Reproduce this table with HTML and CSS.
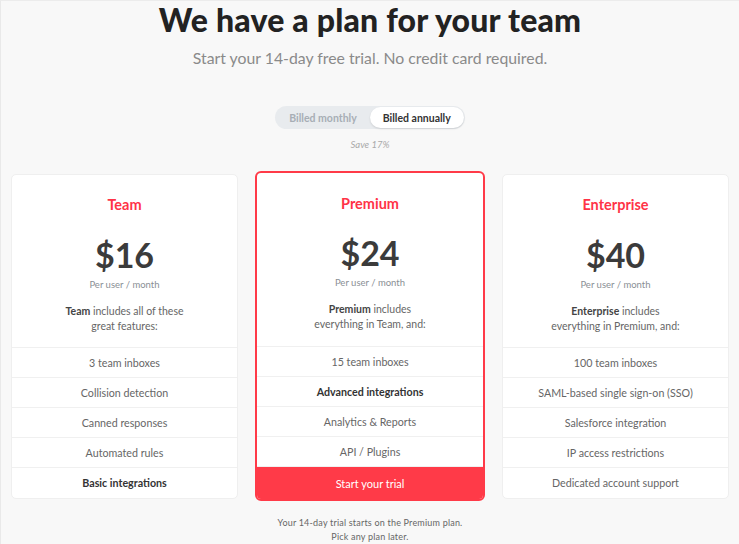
FILE: index.html
```html
<!DOCTYPE html>
<html>
<head>
<meta charset="utf-8">
<link rel="stylesheet" href="styles.css">
</head>
<body>
<div class="page">
  <h1 class="title">We have a plan for your team</h1>
  <p class="subtitle">Start your 14-day free trial. No credit card required.</p>
  <div class="toggle">
    <span class="opt">Billed monthly</span>
    <span class="opt active">Billed annually</span>
  </div>
  <p class="save">Save 17%</p>
  <div class="plans">
    <div class="card">
      <div class="head">
        <div class="name">Team</div>
        <div class="price">$16</div>
        <div class="per">Per user / month</div>
        <div class="desc"><b>Team</b> includes all of these<br>great features:</div>
      </div>
      <div class="row">3 team inboxes</div>
      <div class="row">Collision detection</div>
      <div class="row">Canned responses</div>
      <div class="row">Automated rules</div>
      <div class="row strong">Basic integrations</div>
    </div>
    <div class="card featured">
      <div class="head">
        <div class="name">Premium</div>
        <div class="price">$24</div>
        <div class="per">Per user / month</div>
        <div class="desc"><b>Premium</b> includes<br>everything in Team, and:</div>
      </div>
      <div class="row">15 team inboxes</div>
      <div class="row strong">Advanced integrations</div>
      <div class="row">Analytics &amp; Reports</div>
      <div class="row">API / Plugins</div>
      <div class="cta">Start your trial</div>
    </div>
    <div class="card">
      <div class="head">
        <div class="name">Enterprise</div>
        <div class="price">$40</div>
        <div class="per">Per user / month</div>
        <div class="desc"><b>Enterprise</b> includes<br>everything in Premium, and:</div>
      </div>
      <div class="row">100 team inboxes</div>
      <div class="row">SAML-based single sign-on (SSO)</div>
      <div class="row">Salesforce integration</div>
      <div class="row">IP access restrictions</div>
      <div class="row">Dedicated account support</div>
    </div>
  </div>
  <p class="note">Your 14-day trial starts on the Premium plan.<br>Pick any plan later.</p>
</div>
</body>
</html>
```
FILE: styles.css
```css
html, body {
  margin: 0;
  padding: 0;
  background: #f8f8f8;
}
body {
  font-family: "Lato", "Open Sans", sans-serif;
  color: #444;
}
.page {
  width: 738px;
  height: 543px;
  border-left: 1px solid #e9e9e9;
  border-top: 1px solid #ececec;
  display: flex;
  flex-direction: column;
  align-items: center;
  overflow: hidden;
}
.title {
  margin: 1px 0 0;
  font-size: 32px;
  font-weight: 900;
  color: #222;
  line-height: 36px;
  letter-spacing: 0.2px;
}
.subtitle {
  margin: 10px 0 0;
  font-size: 15.8px;
  color: #8a8a8a;
  line-height: 20px;
}
.toggle {
  margin-top: 38px;
  display: flex;
  background: #e8ebee;
  border-radius: 12px;
  padding: 1px;
  height: 23px;
  box-sizing: border-box;
}
.opt {
  font-size: 10.5px;
  font-weight: 700;
  color: #a7aeb5;
  padding: 0 13px;
  display: flex;
  align-items: center;
  border-radius: 11px;
}
.opt.active {
  background: #fff;
  color: #333;
  box-shadow: 0 1px 2px rgba(0,0,0,0.12);
}
.save {
  margin: 9px 0 0;
  font-size: 9.5px;
  font-style: italic;
  color: #a9a9a9;
  line-height: 13px;
}
.plans {
  margin-top: 20px;
  display: flex;
  align-items: center;
  gap: 17px;
}
.card {
  width: 225px;
  background: #fff;
  border: 1px solid #efefef;
  border-radius: 5px;
  display: flex;
  flex-direction: column;
}
.card.featured {
  width: 226px;
  border: 2px solid #ff3a48;
  border-radius: 6px;
  overflow: hidden;
}
.head {
  height: 172px;
  display: flex;
  flex-direction: column;
  align-items: center;
  border-bottom: 1px solid #f0f0f0;
}
.featured .head {
  height: 173px;
}
.name {
  margin-top: 21px;
  font-size: 14.5px;
  font-weight: 700;
  color: #ff3347;
  line-height: 18px;
}
.featured .name {
  margin-top: 22px;
}
.price {
  margin-top: 21px;
  font-size: 34px;
  font-weight: 700;
  color: #3b3b3b;
  line-height: 40px;
}
.featured .price {
  margin-top: 20px;
}
.per {
  margin-top: 4px;
  font-size: 9.5px;
  color: #8a8f95;
  line-height: 12px;
}
.desc {
  margin-top: 13px;
  font-size: 10.5px;
  color: #666;
  line-height: 15px;
  text-align: center;
}
.desc b {
  color: #444;
}
.row {
  height: 29px;
  border-bottom: 1px solid #f0f0f0;
  display: flex;
  align-items: center;
  justify-content: center;
  font-size: 10.7px;
  color: #666;
}
.row:last-child {
  border-bottom: none;
  height: 30px;
}
.row.strong {
  font-weight: 700;
  color: #333;
}
.cta {
  height: 32px;
  background: #ff3a48;
  color: #fff;
  font-size: 11px;
  display: flex;
  align-items: center;
  justify-content: center;
}
.note {
  margin: 15px 0 0;
  font-size: 9px;
  color: #666;
  line-height: 14px;
  text-align: center;
  letter-spacing: 0.2px;
}
```
